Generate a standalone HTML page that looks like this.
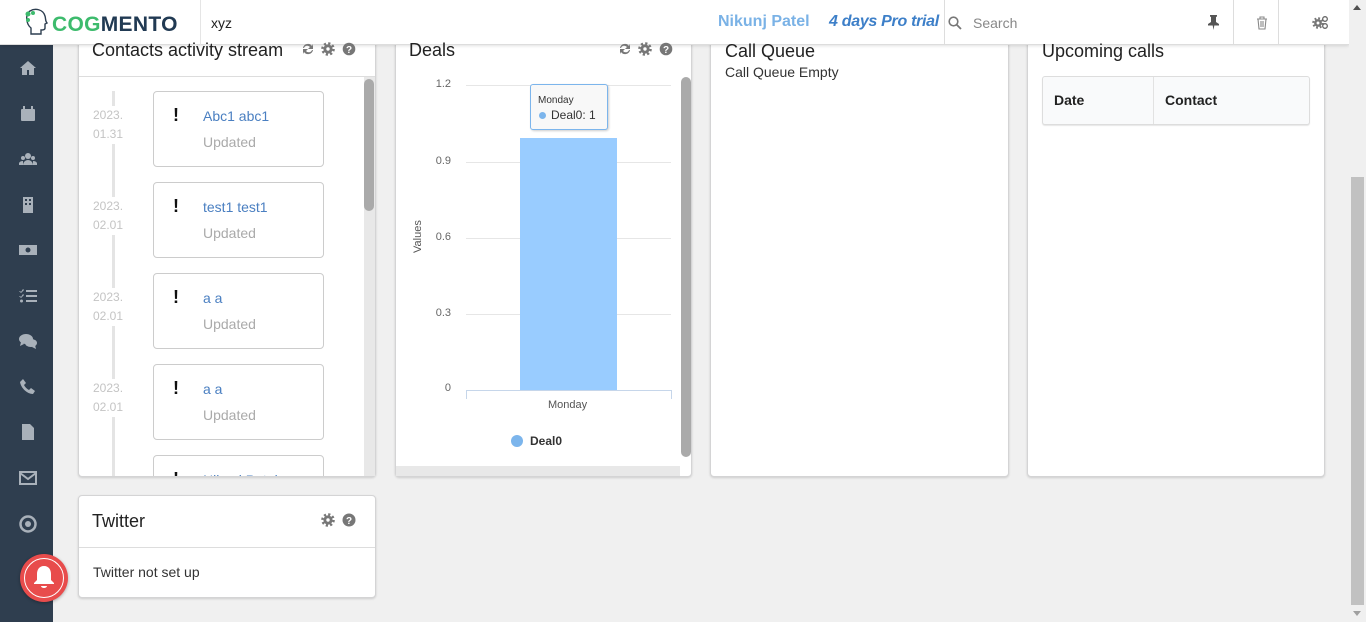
<!DOCTYPE html>
<html><head><meta charset="utf-8"><style>
*{box-sizing:border-box;margin:0;padding:0}
body{width:1366px;height:622px;overflow:hidden;background:#f0f0f0;font-family:"Liberation Sans",sans-serif;position:relative;color:#222}
.abs{position:absolute}
.side{left:0;top:0;width:53px;height:622px;background:#2f3e4f}
.side svg{position:absolute;left:19px;width:18px;height:18px;fill:#a9b1ba}
.hdr{left:0;top:0;width:1349px;height:45px;background:#fff;border-bottom:1px solid #ddd;box-shadow:0 1px 3px rgba(0,0,0,.12)}
.card{background:#fff;border:1px solid #d4d4d5;border-radius:4px;box-shadow:0 1px 2px rgba(0,0,0,.15)}
.title{font-size:18px;color:#222}
.ic{fill:#777}
.dt{position:absolute;left:14px;background:#fff;color:#c4c4c4;font-size:12px;line-height:19px}
.box{left:153px;width:171px;height:76px;border:1px solid #ccc;border-radius:4px;background:#fff}
.box .n{position:absolute;left:49px;top:16px;color:#4a7fc1;font-size:14px}
.box .u{position:absolute;left:49px;top:42px;color:#aaa;font-size:14px}
.box .e{position:absolute;left:19px;top:13px;font-weight:bold;font-size:18px;color:#111}
.grid{left:466px;width:205px;height:1px;background:#e6e6e6}
.yl{font-size:11px;color:#666;text-align:right;width:30px;left:421px}
</style></head><body>
<svg width="0" height="0" style="position:absolute"><defs>
<g id="cog"><circle cx="0" cy="0" r="4.6" fill="#777"/><circle cx="0" cy="0" r="5.6" fill="none" stroke="#777" stroke-width="2.4" stroke-dasharray="2.2 2.2"/><circle cx="0" cy="0" r="1.7" fill="#fff"/></g>
</defs></svg>
<div class="abs side">
<svg style="top:59px" viewBox="0 0 18 18"><path d="M9 2 1 9h2v7h5v-5h2v5h5V9h2z"/></svg>
<svg style="top:105px" viewBox="0 0 18 18"><rect x="2" y="4" width="14" height="12" rx="1"/><rect x="4" y="1" width="2" height="4"/><rect x="12" y="1" width="2" height="4"/></svg>
<svg style="top:150px" viewBox="0 0 18 18"><circle cx="9" cy="6" r="3"/><circle cx="4" cy="8" r="2"/><circle cx="14" cy="8" r="2"/><path d="M4 15a5 5 0 0110 0zM0 15a4 3 0 014-4v4zM18 15a4 3 0 00-4-4v4z"/></svg>
<svg style="top:196px" viewBox="0 0 18 18"><path d="M4 1h10v16H4z"/><rect x="6" y="3" width="2" height="2" fill="#2f3e4f"/><rect x="10" y="3" width="2" height="2" fill="#2f3e4f"/><rect x="6" y="7" width="2" height="2" fill="#2f3e4f"/><rect x="10" y="7" width="2" height="2" fill="#2f3e4f"/></svg>
<svg style="top:241px" viewBox="0 0 18 18"><rect x="0" y="4" width="18" height="10"/><circle cx="9" cy="9" r="2.5" fill="#2f3e4f"/></svg>
<svg style="top:287px" viewBox="0 0 18 18"><path d="M7 3h11v2H7zM7 8h11v2H7zM7 13h11v2H7zM1 4l1 1 2-3 1 1-3 3-2-2zM1 9l1 1 2-3 1 1-3 3-2-2z"/><circle cx="2.5" cy="14" r="1.5"/></svg>
<svg style="top:332px" viewBox="0 0 18 18"><ellipse cx="7" cy="7" rx="7" ry="5"/><ellipse cx="12" cy="11" rx="6" ry="4"/><path d="M2 10 1 14l4-2zM16 13l1 4-4-2z"/></svg>
<svg style="top:378px" viewBox="0 0 18 18"><path d="M4 1l3 4-2 2c1 2 3 4 5 5l2-2 4 3-2 3C8 16 2 10 1 4z"/></svg>
<svg style="top:423px" viewBox="0 0 18 18"><path d="M3 1h8l4 4v12H3z"/></svg>
<svg style="top:469px" viewBox="0 0 18 18"><rect x="1" y="3" width="16" height="12" fill="none" stroke="#a9b1ba" stroke-width="2"/><path d="M1 4l8 6 8-6" fill="none" stroke="#a9b1ba" stroke-width="2"/></svg>
<svg style="top:515px" viewBox="0 0 18 18"><circle cx="9" cy="9" r="7.5" fill="none" stroke="#a9b1ba" stroke-width="2.5"/><circle cx="9" cy="9" r="3"/></svg>
</div>
<div class="abs hdr">
 <svg class="abs" style="left:22px;top:8px" width="26" height="28" viewBox="0 0 26 28"><path d="M8 3c5-3 13-2 15 5 1 3 0 5 2 7l-2 1v4c0 2-2 2-4 2v4H9v-6C4 16 3 6 8 3z" fill="none" stroke="#2d3e50" stroke-width="1.4"/><circle cx="6" cy="6" r="2.5" fill="#3dbb6d"/><circle cx="11" cy="5" r="2" fill="#3dbb6d"/><circle cx="6" cy="12" r="2" fill="#3dbb6d"/></svg>
 <div class="abs" style="left:52px;top:13px;font-size:21px;font-weight:bold;letter-spacing:0.3px"><span style="color:#3dbb6d">COG</span><span style="color:#213a53">MENTO</span></div>
 <div class="abs" style="left:200px;top:0;width:1px;height:45px;background:#e5e5e5"></div>
 <div class="abs" style="left:211px;top:15px;font-size:14px">xyz</div>
 <div class="abs" style="left:718px;top:13px;font-size:16px;font-weight:bold;color:#7ab2e6">Nikunj Patel</div>
 <div class="abs" style="left:829px;top:13px;font-size:16px;font-weight:bold;font-style:italic;color:#3d7fc8;letter-spacing:-0.3px">4 days Pro trial</div>
 <div class="abs" style="left:944px;top:0;width:1px;height:45px;background:#ddd"></div>
 <svg class="abs" style="left:948px;top:16px" width="14" height="14" viewBox="0 0 14 14"><circle cx="5.5" cy="5.5" r="4.3" fill="none" stroke="#777" stroke-width="1.6"/><path d="M8.5 8.5 13 13" stroke="#777" stroke-width="1.8"/></svg>
 <div class="abs" style="left:973px;top:15px;font-size:14px;color:#888">Search</div>
 <svg class="abs" style="left:1207px;top:15px" width="13" height="15" viewBox="0 0 13 15"><path d="M3 0h7v1.5L9 2v5l3 2v1.5H7.3L6.5 15 5.7 10.5H1V9l3-2V2L3 1.5z" fill="#555"/></svg>
 <div class="abs" style="left:1233px;top:0;width:1px;height:45px;background:#ddd"></div>
 <svg class="abs" style="left:1256px;top:16px" width="12" height="14" viewBox="0 0 12 14"><path d="M1 3h10M4 3V1h4v2M2 3l1 10h6l1-10M5 5v6M7 5v6" fill="none" stroke="#888" stroke-width="1.1"/></svg>
 <div class="abs" style="left:1278px;top:0;width:1px;height:45px;background:#ddd"></div>
 <svg class="abs" style="left:1312px;top:15px" width="17" height="15" viewBox="0 0 17 15"><g transform="translate(6,8) scale(0.85)"><use href="#cog"/></g><circle cx="13" cy="4" r="2.3" fill="none" stroke="#666" stroke-width="1.3"/><circle cx="13" cy="11" r="2.3" fill="none" stroke="#666" stroke-width="1.3"/></svg>
</div>
<!-- Contacts -->
<div class="abs card" style="left:78px;top:20px;width:298px;height:457px;z-index:-1"></div>
<div class="abs title" style="left:92px;top:40px">Contacts activity stream</div>
<svg class="abs" style="left:301px;top:42px" width="56" height="14" viewBox="0 0 56 14"><path d="M2 6a5 5 0 019-2l1-2v5H7l2-2a3.5 3.5 0 00-6 1zM12 8a5 5 0 01-9 2l-1 2V7h5l-2 2a3.5 3.5 0 006-1z" class="ic"/><g transform="translate(27,7)"><use href="#cog"/></g><circle cx="48" cy="7" r="6.3" class="ic"/><text x="48" y="11" font-size="10" font-weight="bold" fill="#fff" text-anchor="middle" font-family="Liberation Sans">?</text></svg>
<div class="abs" style="left:79px;top:76px;width:296px;height:400px;border-top:1px solid #ddd;overflow:hidden">
 <div class="abs" style="left:33px;top:14px;width:3px;height:400px;background:#e4e4e4"></div>
 <div class="abs" style="left:285px;top:0;width:11px;height:400px;background:#e8e8e8"></div>
 <div class="abs" style="left:285px;top:2px;width:10px;height:132px;background:#aaa;border-radius:5px"></div>
</div>
<div class="abs" style="left:79px;top:76px;width:285px;height:400px;overflow:hidden">
 <div class="dt" style="top:30px">2023.<br>01.31</div>
 <div class="dt" style="top:121px">2023.<br>02.01</div>
 <div class="dt" style="top:212px">2023.<br>02.01</div>
 <div class="dt" style="top:303px">2023.<br>02.01</div>
 <div class="abs box" style="left:74px;top:15px"><span class="e">!</span><span class="n">Abc1 abc1</span><span class="u">Updated</span></div>
 <div class="abs box" style="left:74px;top:106px"><span class="e">!</span><span class="n">test1 test1</span><span class="u">Updated</span></div>
 <div class="abs box" style="left:74px;top:197px"><span class="e">!</span><span class="n">a a</span><span class="u">Updated</span></div>
 <div class="abs box" style="left:74px;top:288px"><span class="e">!</span><span class="n">a a</span><span class="u">Updated</span></div>
 <div class="abs box" style="left:74px;top:379px"><span class="e">!</span><span class="n">Nikunj Patel</span></div>
</div>
<!-- Deals -->
<div class="abs card" style="left:395px;top:20px;width:297px;height:457px;z-index:-1"></div>
<div class="abs title" style="left:409px;top:40px">Deals</div>
<svg class="abs" style="left:618px;top:42px" width="56" height="14" viewBox="0 0 56 14"><path d="M2 6a5 5 0 019-2l1-2v5H7l2-2a3.5 3.5 0 00-6 1zM12 8a5 5 0 01-9 2l-1 2V7h5l-2 2a3.5 3.5 0 006-1z" class="ic"/><g transform="translate(27,7)"><use href="#cog"/></g><circle cx="48" cy="7" r="6.3" class="ic"/><text x="48" y="11" font-size="10" font-weight="bold" fill="#fff" text-anchor="middle" font-family="Liberation Sans">?</text></svg>
<div class="abs" style="left:680px;top:76px;width:11px;height:390px;background:#fff"></div>
<div class="abs" style="left:681px;top:77px;width:10px;height:380px;background:#aaa;border-radius:5px"></div>
<div class="abs" style="left:396px;top:466px;width:284px;height:10px;background:#e8e8e8"></div>
<div class="abs grid" style="top:85px"></div><div class="abs grid" style="top:162px"></div><div class="abs grid" style="top:238px"></div><div class="abs grid" style="top:314px"></div>
<div class="abs yl" style="top:78px">1.2</div><div class="abs yl" style="top:155px">0.9</div><div class="abs yl" style="top:231px">0.6</div><div class="abs yl" style="top:307px">0.3</div><div class="abs yl" style="top:382px">0</div>
<div class="abs" style="left:403px;top:232px;font-size:11px;color:#555;transform:rotate(-90deg);transform-origin:center;width:30px;text-align:center">Values</div>
<div class="abs" style="left:520px;top:138px;width:97px;height:252px;background:#99ccff"></div>
<div class="abs" style="left:466px;top:390px;width:206px;height:9px;border:1px solid #c6d6ea;border-bottom:none"></div>
<div class="abs" style="left:548px;top:399px;font-size:11px;color:#555">Monday</div>
<div class="abs" style="left:530px;top:84px;width:78px;height:46px;background:#f8f8f8;border:1px solid #7cb5ec;border-radius:3px;box-shadow:1px 1px 2px rgba(0,0,0,.2)">
 <div class="abs" style="left:7px;top:10px;font-size:10px;color:#333">Monday</div>
 <div class="abs" style="left:8px;top:27px;width:7px;height:7px;border-radius:50%;background:#7cb5ec"></div>
 <div class="abs" style="left:20px;top:23px;font-size:12px;color:#333">Deal0: 1</div>
</div>
<div class="abs" style="left:511px;top:435px;width:12px;height:12px;border-radius:50%;background:#7cb5ec"></div>
<div class="abs" style="left:530px;top:434px;font-size:12px;font-weight:bold;color:#333">Deal0</div>
<!-- Call Queue -->
<div class="abs card" style="left:710px;top:20px;width:299px;height:457px;z-index:-1"></div>
<div class="abs title" style="left:725px;top:41px">Call Queue</div>
<div class="abs" style="left:725px;top:64px;font-size:14px;color:#333">Call Queue Empty</div>
<!-- Upcoming -->
<div class="abs card" style="left:1027px;top:20px;width:298px;height:457px;z-index:-1"></div>
<div class="abs title" style="left:1042px;top:41px">Upcoming calls</div>
<div class="abs" style="left:1042px;top:76px;width:268px;height:49px;background:#f9fafb;border:1px solid #ddd;border-radius:3px;box-shadow:0 1px 1px rgba(0,0,0,.1)">
 <div class="abs" style="left:110px;top:0;width:1px;height:47px;background:#e2e2e2"></div>
 <div class="abs" style="left:11px;top:15px;font-size:14px;font-weight:bold;color:#222">Date</div>
 <div class="abs" style="left:122px;top:15px;font-size:14px;font-weight:bold;color:#222">Contact</div>
</div>
<!-- Twitter -->
<div class="abs card" style="left:78px;top:495px;width:298px;height:103px"></div>
<div class="abs" style="left:79px;top:547px;width:296px;height:1px;background:#ddd"></div>
<div class="abs title" style="left:92px;top:511px">Twitter</div>
<svg class="abs" style="left:321px;top:513px" width="36" height="14" viewBox="0 0 36 14"><g transform="translate(7,7)"><use href="#cog"/></g><circle cx="28" cy="7" r="6.5" class="ic"/><text x="28" y="11" font-size="10" font-weight="bold" fill="#fff" text-anchor="middle" font-family="Liberation Sans">?</text></svg>
<div class="abs" style="left:93px;top:564px;font-size:14px;color:#333">Twitter not set up</div>
<!-- bell -->
<div class="abs" style="left:20px;top:554px;width:48px;height:48px;border-radius:50%;background:#e84c4c;box-shadow:0 1px 3px rgba(0,0,0,.3)">
 <div class="abs" style="left:4px;top:4px;width:40px;height:40px;border-radius:50%;border:1.5px solid #fff"></div>
 <svg class="abs" style="left:13px;top:11px" width="22" height="25" viewBox="0 0 22 25"><path d="M11 1c5 0 7 4 7 8v6l3 3v1H1v-1l3-3V9c0-4 2-8 7-8z" fill="#fff"/><path d="M8 21h6a3 2 0 01-6 0z" fill="#fff"/></svg>
</div>
<!-- page scrollbar -->
<div class="abs" style="left:1349px;top:0;width:17px;height:622px;background:#f0f0f0"></div>
<div class="abs" style="left:1351px;top:177px;width:13px;height:428px;background:#c1c1c1"></div>
<div class="abs" style="left:1353px;top:5px;width:0;height:0;border-left:4px solid transparent;border-right:4px solid transparent;border-bottom:5px solid #505050"></div>
<div class="abs" style="left:1353px;top:611px;width:0;height:0;border-left:4px solid transparent;border-right:4px solid transparent;border-top:5px solid #a0a0a0"></div>
</body></html>
